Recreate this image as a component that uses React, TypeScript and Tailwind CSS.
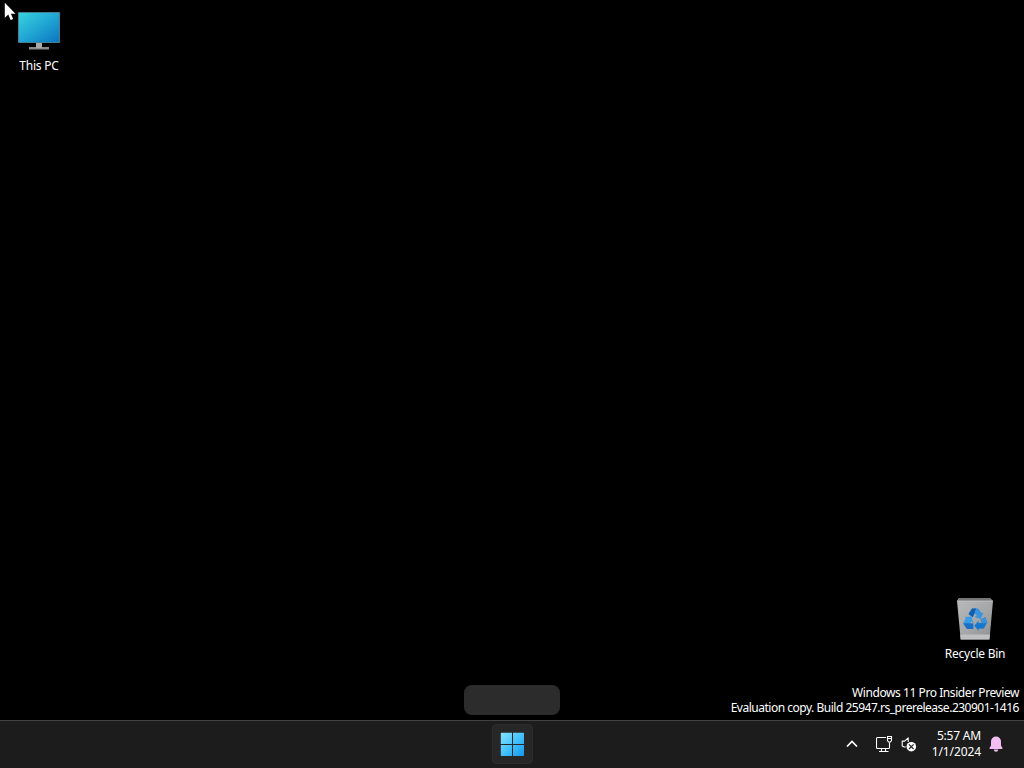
import type { ReactNode } from "react"

interface ShortcutProps {
  label: string
  labelClass: string
  className: string
  children: ReactNode
}

function Shortcut({ label, labelClass, className, children }: ShortcutProps) {
  return (
    <button className={`absolute flex w-[76px] flex-col items-center ${className}`}>
      {children}
      <span className={`whitespace-nowrap text-xs leading-4 ${labelClass}`}>{label}</span>
    </button>
  )
}

function Cursor() {
  return (
    <svg className="absolute left-1 top-0.5 z-10" width="13" height="20" viewBox="0 0 13 20">
      <path d="M.8.8v15l3.5-3.2 2.3 5.4 2.6-1.1-2.3-5.2h4.6z" fill="#fff" />
    </svg>
  )
}

function MonitorIcon() {
  return (
    <svg width="44" height="40" viewBox="0 0 44 40">
      <defs>
        <linearGradient id="screen" x1="0" y1="0" x2="1" y2="1">
          <stop offset="0" stopColor="#36d3de" />
          <stop offset="0.5" stopColor="#21a6d3" />
          <stop offset="1" stopColor="#0b76c2" />
        </linearGradient>
      </defs>
      <rect x="1" y="1" width="42" height="31" rx="0.8" fill="#477f91" />
      <rect x="2" y="2" width="40" height="29" fill="url(#screen)" />
      <path d="M12 36h20v2.5H12z" fill="#8c8c8c" />
      <path d="M19 32h6v5h-6z" fill="#aaa" />
    </svg>
  )
}

function RecycleBinIcon() {
  return (
    <svg width="40" height="44" viewBox="0 0 40 44">
      <defs>
        <linearGradient id="bin" x1="0" y1="0" x2="1" y2="1">
          <stop offset="0" stopColor="#b8babb" />
          <stop offset="0.55" stopColor="#a5a7a9" />
          <stop offset="1" stopColor="#8d8f91" />
        </linearGradient>
      </defs>
      <path d="M4 1h31l3 3-3.5 38.4H5.7L2 4z" fill="url(#bin)" />
      <path d="M4.5 1h30.2l2.6 3H2.4z" fill="#747678" />
      <path d="M2.3 4h35.4" stroke="#c8c9ca" strokeWidth="0.8" />
      <path d="M5.2 37.5h29.7l-.5 5H5.7z" fill="#bfc0c1" />
      <path d="M13.5 17l3.6-5.5h6.2l3.2 4.6 2-.7-2.8 6.6-6.2-2.1 2.2-1.2-1.9-2.2-2 3.8z" fill="#3a93dc" />
      <path d="M13.5 17l3.6-5.5h4l-3.3 8.8z" fill="#125fae" />
      <path d="M25.6 22.5l4.7-2.2 1.8 5-3.2 6.3-5.4.2v2l-4.2-5.1 4.2-5v2.4h3.4z" fill="#1677ce" />
      <path d="M25.6 22.5l4.7-2.2 1.8 5-4 1.4z" fill="#3a93dc" />
      <path d="M9.7 20.1l6.6-.5 2.2 6.1-2.2-.9-1.5 1.7h3.5v5.4H12l-3.9-5.6 2.7-4.7z" fill="#3a9ce8" />
      <path d="M12 31.9l-3.9-5.6h5.8l4.4.2v5.4z" fill="#1a70c4" />
    </svg>
  )
}

function StartIcon() {
  return (
    <svg width="24" height="24" viewBox="0 0 24 24">
      <defs>
        <linearGradient id="start" x1="0" y1="0" x2="24" y2="24" gradientUnits="userSpaceOnUse">
          <stop offset="0" stopColor="#8be6ff" />
          <stop offset="0.5" stopColor="#47c4fa" />
          <stop offset="1" stopColor="#1397f2" />
        </linearGradient>
      </defs>
      <path
        d="M1.5 .7H12V12H.8V1.4a.7.7 0 0 1 .7-.7zM13 .7h10.3a.7.7 0 0 1 .7.7V12H13zM.8 13H12v11H1.5a.7.7 0 0 1-.7-.7zM13 13h11v10.3a.7.7 0 0 1-.7.7H13z"
        fill="url(#start)"
      />
    </svg>
  )
}

function ChevronUpIcon() {
  return (
    <svg width="12" height="8" viewBox="0 0 12 8" fill="none" stroke="#fff" strokeWidth="1.7">
      <path d="M1 6.5l5-5 5 5" />
    </svg>
  )
}

function NetworkIcon() {
  return (
    <svg width="17" height="17" viewBox="0 0 17 17" fill="none" stroke="#fff" strokeWidth="1.1">
      <path d="M10 1.5H1.5A1 1 0 0 0 .5 2.5v9a1 1 0 0 0 1 1h11a1 1 0 0 0 1-1V6.5" />
      <path d="M5.5 12.5v3M9.5 12.5v3M3 15.5h9.5" />
      <path d="M11.5.5h4v4l-1 1.5h-2l-1-1.5zM11.5 2.5h4" />
    </svg>
  )
}

function VolumeMutedIcon() {
  return (
    <svg width="16" height="16" viewBox="0 0 16 16" fill="none">
      <path
        d="M4.8 11H3.2L1.2 9.9V5.1h2.4L7.2 1.8v4.2"
        stroke="#fff"
        strokeWidth="1.1"
        strokeLinejoin="round"
      />
      <circle cx="10.3" cy="10.7" r="4.8" fill="#fff" />
      <path d="M8 8.4l4.6 4.6M12.6 8.4L8 13" stroke="#222" strokeWidth="1.1" />
    </svg>
  )
}

function BellIcon() {
  return (
    <svg width="14" height="16" viewBox="0 0 14 16" fill="#f2bdf3">
      <path d="M7 .5a5 5 0 0 1 5 5v4l1.4 2.3c.3.5 0 1.2-.7 1.2H1.3c-.7 0-1-.7-.7-1.2L2 9.5v-4a5 5 0 0 1 5-5z" />
      <path d="M4.8 13.5h4.4a2.2 2.2 0 0 1-4.4 0z" />
    </svg>
  )
}

export default function App() {
  return (
    <div className="relative flex h-[768px] w-[1024px] flex-col overflow-hidden bg-black font-['Noto_Sans','Open_Sans',sans-serif] text-white">
      <main className="relative flex-1">
        <Shortcut label="This PC" labelClass="mt-[7px] tracking-[-0.2px]" className="left-[1px] top-[11px]">
          <MonitorIcon />
        </Shortcut>
        <Shortcut label="Recycle Bin" labelClass="mt-[5px] tracking-[-0.25px]" className="left-[937px] top-[597px]">
          <RecycleBinIcon />
        </Shortcut>

        {/* Empty tooltip above the start button */}
        <div className="absolute bottom-[5px] left-[464px] h-[30px] w-24 rounded-lg bg-[#2c2c2c]" />

        <div className="absolute bottom-[5px] right-[5px] whitespace-nowrap text-right text-xs leading-[15px]">
          <p className="tracking-[-0.43px]">Windows 11 Pro Insider Preview</p>
          <p className="tracking-[-0.49px]">Evaluation copy. Build 25947.rs_prerelease.230901-1416</p>
        </div>
      </main>

      <footer className="grid h-12 grid-cols-[1fr_40px_1fr] items-center border-t border-[#434343] bg-[#1c1c1c] pb-px">
        <div />
        <button className="flex h-10 w-[41px] items-center justify-center rounded border border-[#2b2b2b] bg-[#272727] pr-px">
          <StartIcon />
        </button>
        <div className="flex items-center justify-end pr-[21px]">
          <button className="mr-[18px]">
            <ChevronUpIcon />
          </button>
          <NetworkIcon />
          <div className="ml-[8px]">
            <VolumeMutedIcon />
          </div>
          <div className="ml-[14px] w-[50px] whitespace-nowrap text-right text-xs leading-4">
            <p className="tracking-[-0.2px]">5:57 AM</p>
            <p className="tracking-[-0.1px]">1/1/2024</p>
          </div>
          <div className="ml-2">
            <BellIcon />
          </div>
        </div>
      </footer>
      <Cursor />
    </div>
  )
}
